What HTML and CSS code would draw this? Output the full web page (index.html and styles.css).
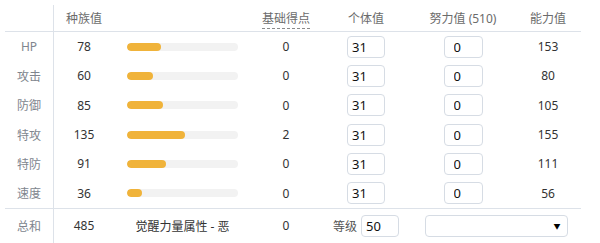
FILE: index.html
```html
<!DOCTYPE html>
<html lang="zh">
<head>
<meta charset="utf-8">
<link rel="stylesheet" href="styles.css">
</head>
<body>
<table class="stats">
  <colgroup>
    <col class="c-label"><col class="c-base"><col class="c-bar"><col class="c-pt"><col class="c-iv"><col class="c-ev"><col class="c-val">
  </colgroup>
  <thead>
    <tr>
      <th class="label"></th>
      <th>种族值</th>
      <th></th>
      <th><span class="abbr">基础得点</span></th>
      <th>个体值</th>
      <th>努力值 (510)</th>
      <th>能力值</th>
    </tr>
  </thead>
  <tbody>
    <tr>
      <td class="label">HP</td><td>78</td>
      <td><div class="track"><div class="fill" style="width:34px"></div></div></td>
      <td>0</td><td><input class="iv" value="31"></td><td><input class="ev" value="0"></td><td>153</td>
    </tr>
    <tr>
      <td class="label">攻击</td><td>60</td>
      <td><div class="track"><div class="fill" style="width:26px"></div></div></td>
      <td>0</td><td><input class="iv" value="31"></td><td><input class="ev" value="0"></td><td>80</td>
    </tr>
    <tr>
      <td class="label">防御</td><td>85</td>
      <td><div class="track"><div class="fill" style="width:36px"></div></div></td>
      <td>0</td><td><input class="iv" value="31"></td><td><input class="ev" value="0"></td><td>105</td>
    </tr>
    <tr>
      <td class="label">特攻</td><td>135</td>
      <td><div class="track"><div class="fill" style="width:58px"></div></div></td>
      <td>2</td><td><input class="iv" value="31"></td><td><input class="ev" value="0"></td><td>155</td>
    </tr>
    <tr>
      <td class="label">特防</td><td>91</td>
      <td><div class="track"><div class="fill" style="width:39px"></div></div></td>
      <td>0</td><td><input class="iv" value="31"></td><td><input class="ev" value="0"></td><td>111</td>
    </tr>
    <tr class="last">
      <td class="label">速度</td><td>36</td>
      <td><div class="track"><div class="fill" style="width:15px"></div></div></td>
      <td>0</td><td><input class="iv" value="31"></td><td><input class="ev" value="0"></td><td>56</td>
    </tr>
  </tbody>
  <tfoot>
    <tr>
      <td class="label">总和</td><td>485</td>
      <td>觉醒力量属性 - 恶</td>
      <td>0</td>
      <td><span class="lv">等级</span><input class="level" value="50"></td>
      <td colspan="2"><div class="select"><span class="arrow">▼</span></div></td>
    </tr>
  </tfoot>
</table>
</body>
</html>
```

FILE: styles.css
```css
html, body {
  margin: 0;
  padding: 0;
  background: #fff;
}
body {
  padding: 5px 0 0 5px;
  font-family: "Noto Sans", "Noto Sans CJK SC", sans-serif;
  font-size: 12px;
  color: #333;
}
.stats {
  border-collapse: separate;
  border-spacing: 0;
  table-layout: fixed;
  width: 576px;
}
.c-label { width: 49px; }
.c-base { width: 60px; }
.c-bar { width: 137px; }
.c-pt { width: 70px; }
.c-iv { width: 90px; }
.c-ev { width: 104px; }
.c-val { width: 66px; }

th, td {
  padding: 0;
  text-align: center;
  vertical-align: middle;
  white-space: nowrap;
}
th {
  height: 26px;
  font-weight: normal;
  color: #6b6b6b;
  border-bottom: 1px solid #dde2e9;
}
tbody td {
  height: 29.33px;
}
tbody tr.last td {
  border-bottom: 1px solid #dde2e9;
}
tfoot td {
  height: 34px;
}
.label {
  color: #80858e;
  border-right: 1px solid #dde2e9;
}
.abbr {
  border-bottom: 1px dashed #8a8a8a;
  padding-bottom: 1px;
}
.track {
  width: 111px;
  height: 8px;
  margin: 0 auto;
  background: #f2f2f2;
  border-radius: 4px;
  overflow: hidden;
}
.fill {
  height: 8px;
  background: #f0b33a;
  border-radius: 4px;
}
input {
  box-sizing: border-box;
  height: 22px;
  border: 1px solid #d6dce4;
  border-radius: 4px;
  font-family: "Noto Sans", sans-serif;
  font-size: 13px;
  color: #111;
  vertical-align: middle;
  margin: 0;
}
.iv {
  width: 38px;
  padding: 0 0 0 4px;
}
.ev {
  width: 39px;
  padding: 0 0 0 9px;
}
.level {
  width: 38px;
  padding: 0 0 0 4px;
  margin-left: 4px;
}
.lv {
  color: #555;
  vertical-align: middle;
}
.select {
  box-sizing: border-box;
  width: 143px;
  height: 22px;
  margin: 0 auto;
  border: 1px solid #d6dce4;
  border-radius: 4px;
  display: flex;
  justify-content: flex-end;
  align-items: center;
  padding-right: 6px;
}
.arrow {
  font-size: 7px;
  color: #000;
}
```
